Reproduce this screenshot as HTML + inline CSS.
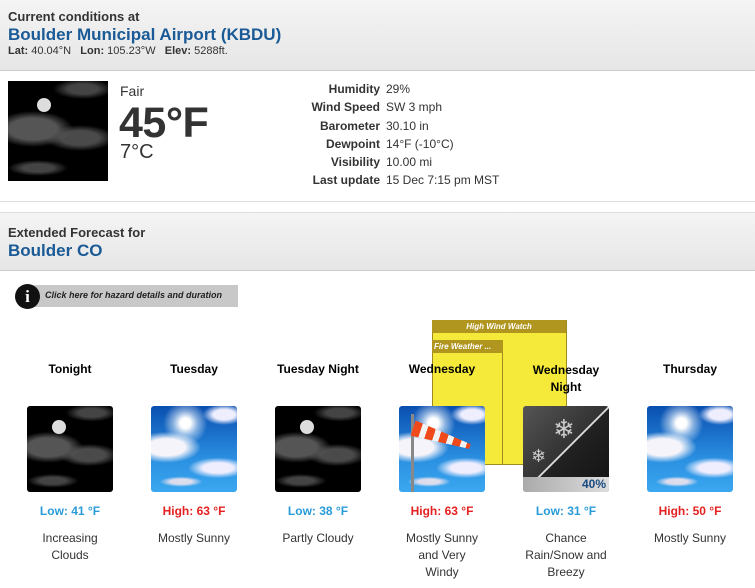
<!DOCTYPE html>
<html><head><style>
body{margin:0;width:755px;height:588px;overflow:hidden;background:#fff;font-family:"Liberation Sans",sans-serif;position:relative}
.a{position:absolute}
.band{position:absolute;left:0;width:755px;background:linear-gradient(#f4f4f4,#e6e6e6);border-bottom:1px solid #ccc}
.h1{font-size:13px;font-weight:bold;color:#333}
.blue{font-size:17px;font-weight:bold;color:#1a5a96}
.night{background:radial-gradient(ellipse 40% 18% at 25% 48%,#555 60%,transparent 100%),radial-gradient(ellipse 35% 13% at 72% 57%,#4a4a4a 55%,transparent 100%),radial-gradient(ellipse 30% 8% at 30% 87%,#444 50%,transparent 100%),radial-gradient(ellipse 30% 10% at 75% 8%,#444 50%,transparent 100%),#000}
.moon{position:absolute;width:14px;height:14px;border-radius:50%;background:#ddd}
.sunny{background:radial-gradient(circle at 40% 20%,#fff 5px,rgba(255,255,255,.5) 12px,transparent 22px),radial-gradient(ellipse 40% 18% at 18% 48%,#f4f4fa 55%,transparent 100%),radial-gradient(ellipse 35% 12% at 78% 72%,#eef 50%,transparent 100%),radial-gradient(ellipse 25% 12% at 85% 10%,#eef 50%,transparent 100%),radial-gradient(ellipse 25% 6% at 35% 88%,#dde 50%,transparent 100%),linear-gradient(#0a4fb0,#2a8ee0 60%,#3aa8f0)}
.img{position:absolute;top:406px;width:86px;height:86px;border-radius:3px}
.col{position:absolute;width:124px;text-align:center;font-size:12px;color:#000}
.lbl{font-weight:bold;font-size:12px}
.t{position:absolute;top:504px;width:124px;text-align:center;font-size:12px;font-weight:bold}
.d{position:absolute;top:530px;width:124px;text-align:center;font-size:12px;line-height:17px;color:#333}
.lo{color:#2a9bd8}.hi{color:#e52020}
.r{position:absolute;font-size:12px;line-height:18.3px}
</style></head><body>
<div class="band" style="top:0;height:70px"></div>
<div class="a h1" style="left:8px;top:9px">Current conditions at</div>
<div class="a blue" style="left:8px;top:25px">Boulder Municipal Airport (KBDU)</div>
<div class="a" style="left:8px;top:45px;font-size:11px;color:#333"><b>Lat:</b> 40.04°N &nbsp;&nbsp;<b>Lon:</b> 105.23°W &nbsp;&nbsp;<b>Elev:</b> 5288ft.</div>
<div class="a night" style="left:8px;top:81px;width:100px;height:100px"><div class="moon" style="left:29px;top:17px"></div></div>
<div class="a" style="left:120px;top:83px;font-size:14px;color:#333">Fair</div>
<div class="a" style="left:119px;top:99px;font-size:43px;font-weight:bold;color:#333;letter-spacing:-0.5px">45°F</div>
<div class="a" style="left:120px;top:141px;font-size:20px;color:#333">7°C</div>
<div class="r" style="left:250px;width:130px;top:80px;text-align:right;font-weight:bold;color:#333">Humidity<br>Wind Speed<br>Barometer<br>Dewpoint<br>Visibility<br>Last update</div>
<div class="r" style="left:386px;top:80px;color:#333">29%<br>SW 3 mph<br>30.10 in<br>14°F (-10°C)<br>10.00 mi<br>15 Dec 7:15 pm MST</div>
<div class="a" style="left:0;top:201px;width:755px;border-top:1px solid #ddd"></div>
<div class="band" style="top:212px;height:57px;border-top:1px solid #ddd"></div>
<div class="a h1" style="left:8px;top:225px">Extended Forecast for</div>
<div class="a blue" style="left:8px;top:241px">Boulder CO</div>
<div class="a" style="left:25px;top:285px;width:213px;height:22px;background:#c8c8c8"></div>
<div class="a" style="left:15px;top:284px;width:25px;height:25px;border-radius:50%;background:#111;color:#fff;font:bold 17px/25px 'Liberation Serif',serif;text-align:center">i</div>
<div class="a" style="left:45px;top:290px;font-size:9px;font-style:italic;font-weight:bold;color:#222">Click here for hazard details and duration</div>
<div class="a" style="left:432px;top:320px;width:133px;height:144px;background:#f5ea3a;border:1px solid #a08a20;border-top:none"></div>
<div class="a" style="left:432px;top:320px;width:134px;height:13px;background:#b0951f;color:#fff;font:italic bold 8px/13px 'Liberation Sans',sans-serif;text-align:center">High Wind Watch</div>
<div class="a" style="left:432px;top:340px;width:70px;height:124px;border-right:1px solid #a08a20"></div>
<div class="a" style="left:432px;top:340px;width:71px;height:13px;background:#b0951f;color:#fff;font:italic bold 8px/13px 'Liberation Sans',sans-serif;padding-left:2px;box-sizing:border-box;white-space:nowrap">Fire Weather ...</div>

<div class="col lbl" style="left:8px;top:362px">Tonight</div>
<div class="col lbl" style="left:132px;top:362px">Tuesday</div>
<div class="col lbl" style="left:256px;top:362px">Tuesday Night</div>
<div class="col lbl" style="left:380px;top:362px">Wednesday</div>
<div class="col lbl" style="left:504px;top:362px;line-height:17px">Wednesday<br>Night</div>
<div class="col lbl" style="left:628px;top:362px">Thursday</div>

<div class="img night" style="left:27px"><div class="moon" style="left:25px;top:14px"></div></div>
<div class="img sunny" style="left:151px"></div>
<div class="img night" style="left:275px"><div class="moon" style="left:25px;top:14px"></div></div>
<div class="img sunny" style="left:399px"><div class="a" style="left:12px;top:8px;width:3px;height:78px;background:#888"></div><div class="a" style="left:14px;top:14px;width:60px;height:16px;background:repeating-linear-gradient(90deg,#f04a1a 0 8px,#f3f3f3 8px 14px);transform:rotate(18deg);transform-origin:left center;clip-path:polygon(0 0,100% 35%,100% 65%,0 100%)"></div></div>
<div class="img" style="left:523px;background:linear-gradient(135deg,#555,#333 49.5%,#ddd 50%,#ddd 51%,#222 51.5%,#111);color:#ccc;overflow:hidden"><span class="a" style="left:30px;top:8px;font-size:26px">❄</span><span class="a" style="left:8px;top:40px;font-size:18px">❄</span><div class="a" style="left:0;bottom:0;width:86px;height:15px;background:linear-gradient(90deg,#aaa,#ddd);"></div><div class="a" style="right:3px;bottom:0;font:bold 12px/15px 'Liberation Sans',sans-serif;color:#1a4a80">40%</div></div>
<div class="img sunny" style="left:647px"></div>

<div class="t lo" style="left:8px">Low: 41 °F</div>
<div class="t hi" style="left:132px">High: 63 °F</div>
<div class="t lo" style="left:256px">Low: 38 °F</div>
<div class="t hi" style="left:380px">High: 63 °F</div>
<div class="t lo" style="left:504px">Low: 31 °F</div>
<div class="t hi" style="left:628px">High: 50 °F</div>

<div class="d" style="left:8px">Increasing<br>Clouds</div>
<div class="d" style="left:132px">Mostly Sunny</div>
<div class="d" style="left:256px">Partly Cloudy</div>
<div class="d" style="left:380px">Mostly Sunny<br>and Very<br>Windy</div>
<div class="d" style="left:504px">Chance<br>Rain/Snow and<br>Breezy</div>
<div class="d" style="left:628px">Mostly Sunny</div>
</body></html>
